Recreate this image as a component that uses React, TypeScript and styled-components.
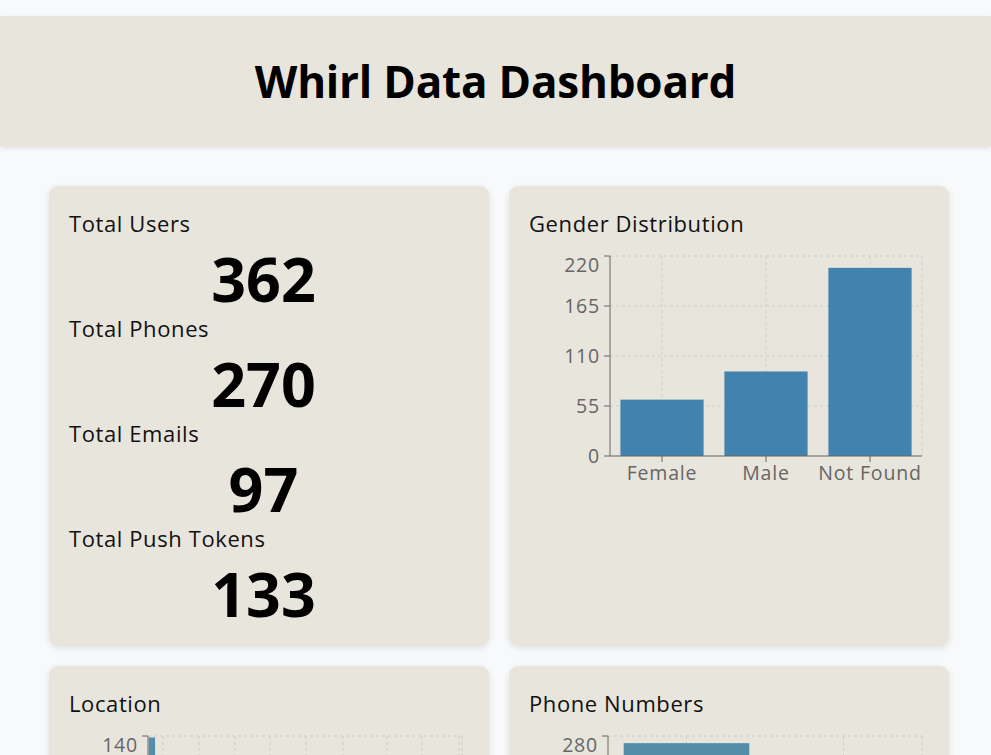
import React from 'react';
import styled, { createGlobalStyle } from 'styled-components';

// --- Global ---

const GlobalStyle = createGlobalStyle`
  html, body {
    margin: 0;
    padding: 0;
    background: #f8f9fb;
    font-family: "Open Sans", "Noto Sans", sans-serif;
    color: #000;
  }
`;

// --- Styled Components ---

const Page = styled.div`
  padding-top: 16px;
  padding-bottom: 40px;
`;

const Header = styled.header`
  height: 130px;
  background: #e8e5dd;
  box-shadow: 0 2px 5px rgba(0, 0, 0, 0.1);
  display: flex;
  align-items: center;
  justify-content: center;

  h1 {
    margin: 0;
    font-size: 44px;
    font-weight: 700;
    letter-spacing: -0.2px;
  }
`;

const Grid = styled.main`
  display: grid;
  grid-template-columns: 1fr 1fr;
  gap: 20px;
  width: 900px;
  margin: 40px 0 0 49px;
`;

const Card = styled.section`
  background: #e8e5dd;
  border-radius: 9px;
  box-shadow: 0 2px 7px rgba(0, 0, 0, 0.1);
  padding: 24px 20px 16px;
  min-height: 420px;
`;

const Label = styled.div`
  font-size: 22px;
  line-height: 26px;
  font-weight: 400;
  letter-spacing: 0.6px;
  color: #111;
`;

const BigNumber = styled.div`
  margin-top: 7px;
  padding-right: 11px;
  font-size: 61px;
  line-height: 72px;
  font-weight: 700;
  text-align: center;
`;

const ChartSvg = styled.svg`
  display: block;
  margin-top: 10px;
  overflow: visible;
`;

const TickText = styled.text`
  font-family: "Open Sans", "Noto Sans", sans-serif;
  font-size: 19.5px;
  letter-spacing: 0.8px;
  fill: #666;
`;

// --- Chart ---

type Datum = { name: string; value: number };

interface BarChartProps {
  data: Datum[];
  max: number;
  color: string;
  axisX?: number;
  width?: number;
  height?: number;
  xGrid?: number[];
}

const BarChart: React.FC<BarChartProps> = ({ data, max, color, axisX = 81, width = 400, height = 250, xGrid }) => {
  const top = 10;
  const bottom = 210;
  const right = 393;
  const plotH = bottom - top;
  const step = max / 4;
  const ticks = [0, 1, 2, 3, 4].map(i => i * step);
  const band = (right - axisX) / data.length;
  const yOf = (v: number) => bottom - (v / max) * plotH;
  const centers = data.map((_, i) => axisX + band * i + band / 2);
  const vLines = xGrid ? xGrid.map(x => axisX + x) : centers;

  return (
    <ChartSvg width={width} height={height}>
      {/* grid */}
      {ticks.map(t => (
        <line key={'h' + t} x1={axisX} x2={right} y1={yOf(t)} y2={yOf(t)} stroke="#ccc" strokeDasharray="3 3" />
      ))}
      {vLines.map((x, i) => (
        <line key={'v' + i} x1={x} x2={x} y1={top} y2={bottom} stroke="#ccc" strokeDasharray="3 3" />
      ))}
      <line x1={right} x2={right} y1={top} y2={bottom} stroke="#ccc" strokeDasharray="3 3" />

      {/* bars */}
      {data.map((d, i) => (
        <rect
          key={d.name}
          x={axisX + band * i + band * 0.1}
          width={band * 0.8}
          y={yOf(d.value)}
          height={bottom - yOf(d.value)}
          fill={color}
        />
      ))}

      {/* y axis */}
      <line x1={axisX} x2={axisX} y1={top} y2={bottom} stroke="#666" />
      {ticks.map(t => (
        <g key={'y' + t}>
          <line x1={axisX - 6} x2={axisX} y1={yOf(t)} y2={yOf(t)} stroke="#666" />
          <TickText x={axisX - 10} y={yOf(t) + (t === max ? 9 : 0)} dy="0.355em" textAnchor="end">
            {t}
          </TickText>
        </g>
      ))}

      {/* x axis */}
      <line x1={axisX} x2={right} y1={bottom} y2={bottom} stroke="#666" />
      {!xGrid &&
        data.map((d, i) => (
          <g key={'x' + d.name}>
            <line x1={centers[i]} x2={centers[i]} y1={bottom} y2={bottom + 6} stroke="#666" />
            <TickText x={centers[i]} y={bottom + 17} dy="0.355em" textAnchor="middle">
              {d.name}
            </TickText>
          </g>
        ))}
    </ChartSvg>
  );
};

// --- Data ---

const stats = [
  { label: 'Total Users', value: 362 },
  { label: 'Total Phones', value: 270 },
  { label: 'Total Emails', value: 97 },
  { label: 'Total Push Tokens', value: 133 },
];

const gender: Datum[] = [
  { name: 'Female', value: 62 },
  { name: 'Male', value: 93 },
  { name: 'Not Found', value: 207 },
];

const locationValues = [139, 24, 18, 15, 12, 11, 10, 9, 8, 8, 7, 7, 6, 6, 5, 5, 5, 4, 4, 4, 4, 3, 3, 3, 3, 3, 2, 2, 2, 2, 2, 2, 2, 1, 1, 1, 1, 1, 1, 1];
const location: Datum[] = locationValues.map((v, i) => ({ name: 'loc' + i, value: v }));

const phones: Datum[] = [
  { name: 'Has Phone', value: 270 },
  { name: 'No Phone', value: 92 },
];

// --- Main Component ---

const App: React.FC = () => {
  return (
    <Page>
      <GlobalStyle />
      <Header>
        <h1>Whirl Data Dashboard</h1>
      </Header>

      <Grid>
        <Card>
          {stats.map(s => (
            <React.Fragment key={s.label}>
              <Label>{s.label}</Label>
              <BigNumber>{s.value}</BigNumber>
            </React.Fragment>
          ))}
        </Card>

        <Card>
          <Label>Gender Distribution</Label>
          <BarChart data={gender} max={220} color="#4183ae" />
        </Card>

        <Card>
          <Label>Location</Label>
          <BarChart
            data={location}
            max={140}
            color="#558ea9"
            axisX={79}
            xGrid={[15, 51, 87, 122, 158, 195, 239, 274, 311]}
          />
        </Card>

        <Card>
          <Label>Phone Numbers</Label>
          <BarChart data={phones} max={280} color="#548da8" axisX={79} />
        </Card>
      </Grid>
    </Page>
  );
};

export default App;
